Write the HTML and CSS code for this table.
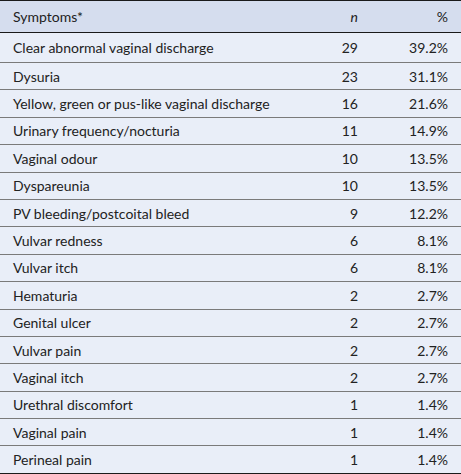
FILE: index.html
```html
<!DOCTYPE html>
<html>
<head>
<meta charset="utf-8">
<link rel="stylesheet" href="styles.css">
</head>
<body>
<table class="tbl">
  <thead>
    <tr><th class="c-name">Symptoms*</th><th class="c-n"><i>n</i></th><th class="c-p">%</th></tr>
  </thead>
  <tbody>
    <tr class="first"><td class="c-name">Clear abnormal vaginal discharge</td><td class="c-n">29</td><td class="c-p">39.2%</td></tr>
    <tr><td class="c-name">Dysuria</td><td class="c-n">23</td><td class="c-p">31.1%</td></tr>
    <tr><td class="c-name">Yellow, green or pus-like vaginal discharge</td><td class="c-n">16</td><td class="c-p">21.6%</td></tr>
    <tr><td class="c-name">Urinary frequency/nocturia</td><td class="c-n">11</td><td class="c-p">14.9%</td></tr>
    <tr><td class="c-name">Vaginal odour</td><td class="c-n">10</td><td class="c-p">13.5%</td></tr>
    <tr><td class="c-name">Dyspareunia</td><td class="c-n">10</td><td class="c-p">13.5%</td></tr>
    <tr><td class="c-name">PV bleeding/postcoital bleed</td><td class="c-n">9</td><td class="c-p">12.2%</td></tr>
    <tr><td class="c-name">Vulvar redness</td><td class="c-n">6</td><td class="c-p">8.1%</td></tr>
    <tr><td class="c-name">Vulvar itch</td><td class="c-n">6</td><td class="c-p">8.1%</td></tr>
    <tr><td class="c-name">Hematuria</td><td class="c-n">2</td><td class="c-p">2.7%</td></tr>
    <tr><td class="c-name">Genital ulcer</td><td class="c-n">2</td><td class="c-p">2.7%</td></tr>
    <tr><td class="c-name">Vulvar pain</td><td class="c-n">2</td><td class="c-p">2.7%</td></tr>
    <tr><td class="c-name">Vaginal itch</td><td class="c-n">2</td><td class="c-p">2.7%</td></tr>
    <tr><td class="c-name">Urethral discomfort</td><td class="c-n">1</td><td class="c-p">1.4%</td></tr>
    <tr><td class="c-name">Vaginal pain</td><td class="c-n">1</td><td class="c-p">1.4%</td></tr>
    <tr><td class="c-name">Perineal pain</td><td class="c-n">1</td><td class="c-p">1.4%</td></tr>
  </tbody>
</table>
</body>
</html>
```
FILE: styles.css
```css
html, body {
  margin: 0;
  padding: 0;
  background: #ffffff;
}
.tbl {
  width: 461px;
  border-collapse: collapse;
  font-family: "Lato", "Open Sans", sans-serif;
  font-size: 14px;
  color: #222222;
  border-top: 1px solid #1a1a1a;
}
.tbl th {
  background: #d5ddee;
  font-weight: normal;
  height: 31px;
  padding: 0 13px;
  border-bottom: 1px solid #1a1a1a;
  vertical-align: middle;
}
.tbl td {
  background: #e9eef8;
  height: 26.4px;
  padding: 0 13px;
  border-bottom: 1px solid #7a7a7a;
  vertical-align: middle;
}
.tbl tr.first td {
  height: 29px;
}
.tbl tbody tr:last-child td {
  border-bottom: 1px solid #1a1a1a;
}
.c-name { text-align: left; }
.c-n { text-align: right; width: 60px; }
.c-p { text-align: right; width: 64px; }
```
